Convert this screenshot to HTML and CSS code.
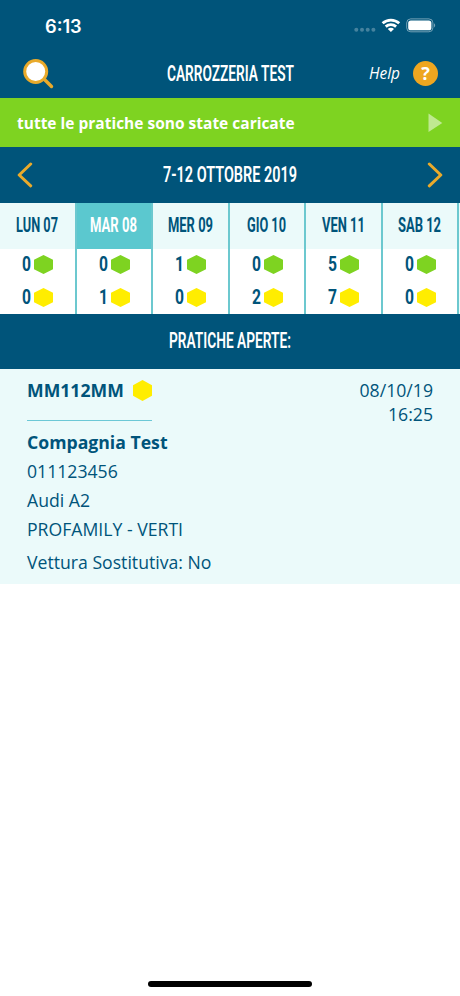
FILE: index.html
```html
<!DOCTYPE html>
<html lang="it">
<head>
<meta charset="utf-8">
<title>Carrozzeria Test</title>
<link rel="stylesheet" href="styles.css">
</head>
<body>
<svg class="defs" width="0" height="0"><symbol id="hex" viewBox="0 0 19 19" preserveAspectRatio="none"><path d="M9.5 0 19 4.7V14.3L9.5 19 0 14.3V4.7Z"/></symbol></svg>
<header class="top">
  <div class="status">
    <span class="clock">6:13</span>
    <svg width="84" height="20" viewBox="0 0 84 20">
      <g fill="#fff" opacity=".27"><circle cx="4.3" cy="14.8" r="2"/><circle cx="10" cy="14.8" r="2"/><circle cx="15.7" cy="14.8" r="2"/><circle cx="21.4" cy="14.8" r="2"/></g>
      <g fill="none" stroke="#fff" stroke-width="2.8"><path d="M30.6 8.3a12.2 12.2 0 0 1 16.6 0"/><path d="M33.7 11.6a7.8 7.8 0 0 1 10.4 0"/></g>
      <path fill="#fff" d="M35.8 14a4.4 4.4 0 0 1 6.2 0L38.9 17.1Z"/>
      <rect x="54.7" y="3.9" width="26.2" height="12.9" rx="4" fill="none" stroke="#fff" stroke-opacity=".45"/>
      <rect x="56.2" y="5.4" width="23.2" height="9.9" rx="2.6" fill="#fff"/>
      <path d="M82 8.2c1.6.8 1.6 3.4 0 4.2Z" fill="#fff" opacity=".45"/>
    </svg>
  </div>
  <div class="bar">
    <svg class="search" width="32" height="32" viewBox="0 0 32 32"><path d="m22.5 21.5 7 7" stroke="#e9aa2b" stroke-width="3.4" stroke-linecap="round"/><circle cx="13.7" cy="13.5" r="11" fill="#fff" stroke="#e9aa2b" stroke-width="3"/></svg>
    <svg class="cond lg" width="126" height="24"><text x="0" y="19" textLength="127" lengthAdjust="spacingAndGlyphs">CARROZZERIA TEST</text></svg>
    <div class="help"><span>Help</span><b>?</b></div>
  </div>
</header>
<div class="notice"><span>tutte le pratiche sono state caricate</span><svg width="15" height="20" viewBox="0 0 15 20"><path d="M.5.5 14.3 10 .5 19Z" fill="#fff" opacity=".5"/></svg></div>
<nav class="week">
  <svg width="16" height="26" viewBox="0 0 16 26"><path d="M13.7 2 2.2 13l11.5 10.8"/></svg>
  <svg class="cond lg" width="134" height="24"><text x="0" y="19" textLength="134" lengthAdjust="spacingAndGlyphs">7-12 OTTOBRE 2019</text></svg>
  <svg width="16" height="26" viewBox="0 0 16 26"><path d="M2.3 2l11.5 11L2.3 23.8"/></svg>
</nav>
<main>
<section class="days">
  <div class="day"><div class="name"><svg class="cond" width="44" height="20"><text y="17" textLength="42" lengthAdjust="spacingAndGlyphs">LUN 07</text></svg></div>
    <div class="count"><svg class="cond" width="9" height="20"><text y="17" textLength="9" lengthAdjust="spacingAndGlyphs">0</text></svg><svg class="hex green"><use href="#hex"/></svg></div>
    <div class="count"><svg class="cond" width="9" height="20"><text y="17" textLength="9" lengthAdjust="spacingAndGlyphs">0</text></svg><svg class="hex"><use href="#hex"/></svg></div></div>
  <div class="day on"><div class="name"><svg class="cond" width="48" height="20"><text y="17" textLength="47" lengthAdjust="spacingAndGlyphs">MAR 08</text></svg></div>
    <div class="count"><svg class="cond" width="9" height="20"><text y="17" textLength="9" lengthAdjust="spacingAndGlyphs">0</text></svg><svg class="hex green"><use href="#hex"/></svg></div>
    <div class="count"><svg class="cond" width="9" height="20"><text y="17" textLength="9" lengthAdjust="spacingAndGlyphs">1</text></svg><svg class="hex"><use href="#hex"/></svg></div></div>
  <div class="day"><div class="name"><svg class="cond" width="46" height="20"><text y="17" textLength="45" lengthAdjust="spacingAndGlyphs">MER 09</text></svg></div>
    <div class="count"><svg class="cond" width="9" height="20"><text y="17" textLength="9" lengthAdjust="spacingAndGlyphs">1</text></svg><svg class="hex green"><use href="#hex"/></svg></div>
    <div class="count"><svg class="cond" width="9" height="20"><text y="17" textLength="9" lengthAdjust="spacingAndGlyphs">0</text></svg><svg class="hex"><use href="#hex"/></svg></div></div>
  <div class="day"><div class="name"><svg class="cond" width="40" height="20"><text y="17" textLength="39" lengthAdjust="spacingAndGlyphs">GIO 10</text></svg></div>
    <div class="count"><svg class="cond" width="9" height="20"><text y="17" textLength="9" lengthAdjust="spacingAndGlyphs">0</text></svg><svg class="hex green"><use href="#hex"/></svg></div>
    <div class="count"><svg class="cond" width="9" height="20"><text y="17" textLength="9" lengthAdjust="spacingAndGlyphs">2</text></svg><svg class="hex"><use href="#hex"/></svg></div></div>
  <div class="day"><div class="name"><svg class="cond" width="44" height="20"><text y="17" textLength="43" lengthAdjust="spacingAndGlyphs">VEN 11</text></svg></div>
    <div class="count"><svg class="cond" width="9" height="20"><text y="17" textLength="9" lengthAdjust="spacingAndGlyphs">5</text></svg><svg class="hex green"><use href="#hex"/></svg></div>
    <div class="count"><svg class="cond" width="9" height="20"><text y="17" textLength="9" lengthAdjust="spacingAndGlyphs">7</text></svg><svg class="hex"><use href="#hex"/></svg></div></div>
  <div class="day"><div class="name"><svg class="cond" width="44" height="20"><text y="17" textLength="43" lengthAdjust="spacingAndGlyphs">SAB 12</text></svg></div>
    <div class="count"><svg class="cond" width="9" height="20"><text y="17" textLength="9" lengthAdjust="spacingAndGlyphs">0</text></svg><svg class="hex green"><use href="#hex"/></svg></div>
    <div class="count"><svg class="cond" width="9" height="20"><text y="17" textLength="9" lengthAdjust="spacingAndGlyphs">0</text></svg><svg class="hex"><use href="#hex"/></svg></div></div>
</section>
<h2 class="open"><svg class="cond lg" width="122" height="24"><text y="18.5" textLength="122" lengthAdjust="spacingAndGlyphs">PRATICHE APERTE:</text></svg></h2>
<article class="card">
  <div class="head">
    <div class="plate"><b>MM112MM</b><svg class="hex"><use href="#hex"/></svg></div>
    <div class="when">08/10/19<br>16:25</div>
  </div>
  <p><b>Compagnia Test</b></p>
  <p>011123456</p>
  <p>Audi A2</p>
  <p>PROFAMILY - VERTI</p>
  <p class="sub">Vettura Sostitutiva: No</p>
</article>
</main>
<footer class="home"><div></div></footer>
</body>
</html>
```
FILE: styles.css
```css
* { box-sizing: border-box; }
body {
  margin: 0;
  height: 996px;
  display: flex;
  flex-direction: column;
  overflow: hidden;
  background: #fff;
  color: #00547a;
  font-family: "Open Sans", "Noto Sans", sans-serif;
  font-size: 17.65px;
}
svg { display: block; flex: none; }
.defs { position: absolute; }
.cond { font: 700 20px Roboto, sans-serif; fill: #00547a; overflow: visible; }
.cond.lg { font-size: 22px; font-weight: 600; fill: #fff; }
.top { height: 98px; background: #00547a; color: #fff; }
.status {
  height: 50px;
  padding: 15px 24px 0 45px;
  display: flex;
  justify-content: space-between;
}
.clock { font: 600 18.2px/22px Inter, sans-serif; }
.bar {
  height: 48px;
  padding: 0 22px;
  display: grid;
  grid-template-columns: 1fr auto 1fr;
  align-items: center;
}
.bar .search { margin-top: -1px; }
.help {
  display: flex;
  justify-content: flex-end;
  align-items: center;
  gap: 13px;
  margin-top: -1px;
  font-size: 15.4px;
  font-style: italic;
}
.help b {
  width: 25px;
  height: 25px;
  border-radius: 50%;
  background: #eea620;
  font-style: normal;
  font-size: 18px;
  line-height: 25px;
  text-align: center;
}
.notice {
  height: 49px;
  padding: 0 17px;
  display: flex;
  align-items: center;
  justify-content: space-between;
  background: #7ed321;
  color: #fff;
  font-size: 15.5px;
  font-weight: 700;
}
.week {
  height: 55.5px;
  padding: 0 17px;
  display: flex;
  align-items: center;
  justify-content: space-between;
  background: #00547a;
}
.week path { fill: none; stroke: #e9aa2b; stroke-width: 3; stroke-linecap: round; stroke-linejoin: round; }
.days {
  height: 111px;
  display: grid;
  grid-template-columns: repeat(6, 76.5px);
  background: #ebfafa;
}
.day { background: #fff; border-right: 2px solid #6cc8cf; }
.name { height: 46px; padding: 12px 0 0 1px; display: flex; justify-content: center; background: #ebfafa; }
.on .name { background: #5bc8cf; }
.on .name .cond { fill: #fff; }
.count { height: 32.5px; padding-left: 22px; display: flex; align-items: center; gap: 3px; }
.count .cond { margin-top: -1px; }
.hex { width: 19px; height: 19px; fill: #ffed00; }
.hex.green { fill: #7ed321; }
.open {
  height: 55.5px;
  margin: 0;
  display: flex;
  justify-content: center;
  align-items: center;
  background: #00547a;
}
.card { height: 215px; padding: 9px 27px 0; background: #ebfafa; }
.card p { margin: 0; line-height: 29px; }
.card .sub { margin-top: 4px; }
.head { height: 49.5px; display: flex; justify-content: space-between; }
.plate {
  width: 125px;
  height: 43px;
  display: flex;
  justify-content: space-between;
  border-bottom: 1px solid #6cc8d6;
  line-height: 25px;
}
.plate .hex { height: 21px; margin-top: 2px; }
.when { text-align: right; line-height: 24px; }
.home { margin-top: auto; height: 15px; }
.home div { width: 164px; height: 6px; margin: 0 auto; border-radius: 3px; background: #000; }
```
